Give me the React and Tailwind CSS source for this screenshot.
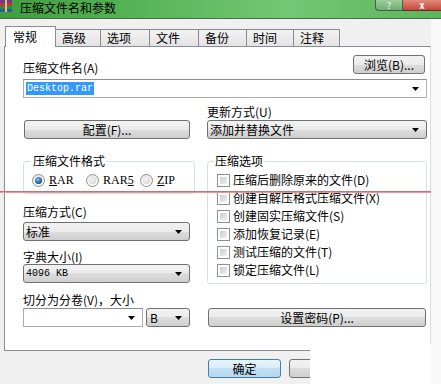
import React from 'react';

const btnBg = "bg-[linear-gradient(#f2f2f2,#ebebeb_50%,#dddddd_50%,#cfcfcf)]";

const Arrow = () => (
  <svg width="7" height="4" viewBox="0 0 7 4">
    <path d="M0 0h7L3.5 4z" fill="#000" />
  </svg>
);

const Dropdown = ({ text, mono, className = "" }) => (
  <div className={`flex h-[19px] items-center justify-between rounded-[3px] border border-[#707070] ${btnBg} pl-[2px] pr-[7px] ${className}`}>
    <span className={mono ? "font-['Liberation_Mono',monospace] text-[10px] leading-none" : "leading-none"}>{text}</span>
    <Arrow />
  </div>
);

const Button = ({ children, className = "" }) => (
  <div className={`flex h-[19px] items-center justify-center rounded-[3px] border border-[#707070] ${btnBg} leading-none ${className}`}>
    {children}
  </div>
);

const Radio = ({ checked, label, mark }) => (
  <div className="flex w-[54px] items-center gap-[4px]">
    <div className="flex h-[13px] w-[13px] items-center justify-center rounded-full border border-[#8e8f8f] bg-[linear-gradient(#e8e8e8,#fbfbfb)]">
      {checked
        ? <div className="h-[7px] w-[7px] rounded-full bg-[radial-gradient(circle_at_40%_35%,#8cc4ee,#1d5f9c_60%,#0d3a66)]" />
        : <div className="h-[7px] w-[7px] rounded-full bg-[radial-gradient(circle_at_40%_35%,#f4f4f4,#cfcfcf)]" />}
    </div>
    <span className="font-['Liberation_Serif',serif] text-[12px] leading-none">
      {label.map((c, i) => <span key={i} className={i === mark ? "underline" : ""}>{c}</span>)}
    </span>
  </div>
);

const Check = ({ label }) => (
  <div className="flex h-[18px] items-center gap-[3px]">
    <div className="h-[13px] w-[13px] border border-[#8e8f8f] bg-white p-[2px]">
      <div className="h-full w-full bg-[linear-gradient(135deg,#c9cdd2,#eef0f2)]" />
    </div>
    <span className="leading-none">{label}</span>
  </div>
);

const tabs = [["常规", 51], ["高级", 46], ["选项", 50], ["文件", 50], ["备份", 49], ["时间", 48], ["注释", 47]];

const options = [
  "压缩后删除原来的文件(D)",
  "创建自解压格式压缩文件(X)",
  "创建固实压缩文件(S)",
  "添加恢复记录(E)",
  "测试压缩的文件(T)",
  "锁定压缩文件(L)",
];

export default function App() {
  return (
    <div className="relative flex h-[384px] w-[441px] flex-col overflow-hidden bg-[#f0f0f0] text-[12px] text-black font-['Noto_Sans_CJK_SC','Liberation_Sans',sans-serif]">
      {/* title bar */}
      <div className="flex h-[19px] shrink-0 items-start border-b border-[#4a6a4a] bg-[linear-gradient(90deg,#3f9d3f,#5ab65a_35%,#74c774_65%,#5cb55c)]">
        <svg width="13" height="13" viewBox="0 0 13 13" className="mr-[7px]">
          <rect x="0" y="0" width="12" height="3" fill="#6b3b8f" />
          <rect x="0" y="3" width="12" height="3" fill="#c0392b" />
          <rect x="0" y="6" width="12" height="3" fill="#2e8b3e" />
          <rect x="0" y="9" width="12" height="3" fill="#2c5aa0" />
          <rect x="5" y="0" width="2" height="12" fill="#d9c27a" />
        </svg>
        <span className="text-[12px] leading-[15px]">压缩文件名和参数</span>
        <div className="ml-auto flex">
          <div className="flex h-[11px] w-[28px] items-center justify-center rounded-bl-[4px] border border-t-0 border-[#4d5a4d] bg-[linear-gradient(#9dcf9d,#6fae6f)] text-[9px] leading-none text-white">?</div>
          <div className="flex h-[11px] w-[38px] items-center justify-center border-b border-[#6b2a25] bg-[linear-gradient(#e08a7a,#c7463a)] text-[9px] font-bold leading-none text-white">x</div>
        </div>
      </div>

      {/* tabs */}
      <div className="flex h-[27px] shrink-0 items-end pl-[5px]">
        {tabs.map(([t, w], i) =>
          i === 0 ? (
            <div key={t} style={{ width: w }} className="relative z-10 -mb-px flex h-[21px] items-center border-x border-t border-[#898c95] bg-white pl-[7px] leading-none">{t}</div>
          ) : (
            <div key={t} style={{ width: w }} className="-ml-px flex h-[17px] items-center border-x border-t border-[#898c95] bg-[linear-gradient(#f3f3f3,#e3e3e3)] pl-[6px] leading-none">{t}</div>
          )
        )}
      </div>

      {/* panel */}
      <div className="ml-[4px] h-[305px] w-[427px] shrink-0 border border-[#898c95] border-r-[#dcdcdc] bg-white pl-[18px]">
        <div className="mt-[8px] flex w-[402px] items-end justify-between">
          <span className="mb-[-1px] leading-[14px]">压缩文件名(A)</span>
          <Button className="h-[18px] w-[72px]">浏览(B)...</Button>
        </div>
        <div className="mt-[5px] flex h-[19px] w-[404px] items-center justify-between border border-[#abadb3] border-t-[#8c8f96] pl-[2px] pr-[7px]">
          <span className="bg-[#3399ff] px-px font-['Liberation_Mono',monospace] text-[10px] leading-[13px] text-white">Desktop.rar</span>
          <Arrow />
        </div>

        <div className="flex gap-[17px]">
          {/* left column */}
          <div className="flex w-[167px] flex-col">
            <Button className="mt-[22px] ml-px w-[166px]">配置(F)...</Button>
            <fieldset className="mt-[15px] rounded-[3px] border border-[#d5dfe5] pb-[3px]">
              <legend className="ml-[7px] px-[2px] leading-[14px]">压缩文件格式</legend>
              <div className="mt-[2px] flex h-[20px] items-center pl-[8px]">
                <Radio checked label={["R", "A", "R"]} mark={0} />
                <Radio label={["R", "A", "R", "5"]} mark={3} />
                <Radio label={["Z", "I", "P"]} mark={0} />
              </div>
            </fieldset>
            <span className="mt-[11px] leading-[14px]">压缩方式(C)</span>
            <Dropdown className="mt-[3px]" text="标准" />
            <span className="mt-[9px] leading-[14px]">字典大小(I)</span>
            <Dropdown text="4096 KB" mono />
            <span className="mt-[10px] leading-[14px]">切分为分卷(V)，大小</span>
            <div className="mt-[1px] flex gap-[3px]">
              <div className="flex h-[19px] w-[120px] items-center justify-end border border-[#abadb3] border-t-[#8c8f96] pr-[7px]">
                <Arrow />
              </div>
              <Dropdown className="w-[44px] pl-[3px]" text="B" />
            </div>
          </div>

          {/* right column */}
          <div className="flex w-[220px] flex-col">
            <span className="mt-[6px] leading-[16px]">更新方式(U)</span>
            <Dropdown text="添加并替换文件" />
            <fieldset className="mt-[15px] rounded-[3px] border border-[#d5dfe5] pb-[4px]">
              <legend className="ml-[6px] px-[1px] leading-[14px]">压缩选项</legend>
              <div className="mt-[3px] flex flex-col pl-[9px]">
                {options.map(o => <Check key={o} label={o} />)}
              </div>
            </fieldset>
            <Button className="mt-[24px] ml-px w-[218px]">设置密码(P)...</Button>
          </div>
        </div>
      </div>

      {/* bottom buttons */}
      <div className="mt-[8px] flex gap-[8px] pl-[208px]">
        <div className="flex h-[19px] w-[73px] items-center justify-center rounded-[3px] border border-[#3c7fb1] bg-[linear-gradient(#eaf4fb,#d9ecf8_50%,#c2e0f4_50%,#b4d7ef)] leading-none">确定</div>
        <Button className="w-[73px]">取消</Button>
      </div>

      {/* red line across the capture */}
      <div className="absolute left-0 right-0 top-[191px] h-[2px] bg-[linear-gradient(#c45a5a,#e8b0b0)]" />
      {/* blank corner of the capture */}
      <div className="absolute bottom-0 left-[310px] right-0 top-[344px] bg-white" />
      <div className="absolute bottom-0 right-0 top-[19px] w-[10px] bg-[#f8f8f8]" />
    </div>
  );
}
